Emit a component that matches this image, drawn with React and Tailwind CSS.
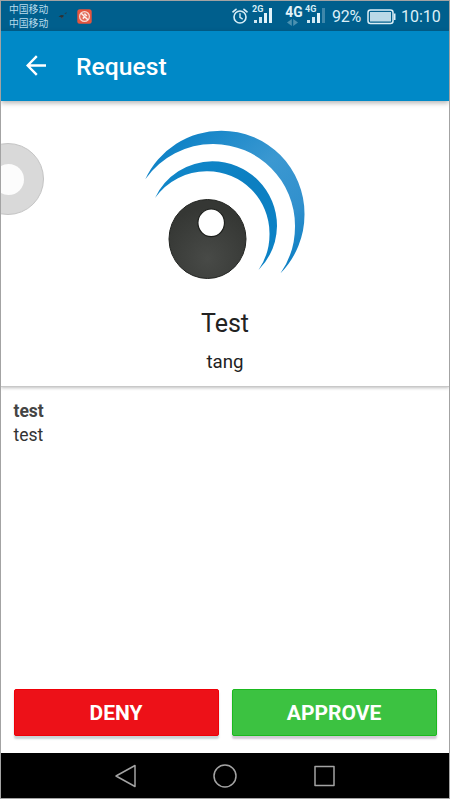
function CarrierLabels() {
  return (
    <div className="ml-2 w-[48px] pt-[2px] font-['Noto_Sans_CJK_SC',sans-serif] text-[9.8px] leading-[13.5px] text-[#b9dcec]">
      <div>中国移动</div>
      <div>中国移动</div>
    </div>
  );
}

function AlarmIcon() {
  return (
    <svg className="mt-[7px] h-[17px] w-[16px] shrink-0" viewBox="0 0 16 17" fill="none" stroke="#d7edf6" strokeLinecap="round">
      <circle cx="8" cy="9" r="6" strokeWidth="1.6" />
      <path d="M1 3.8 4 1.3M15 3.8 12 1.3" strokeWidth="1.7" />
      <path d="M8 5.7V9.3L10.3 10.8" strokeWidth="1.4" />
    </svg>
  );
}

function Signal({ label, dimLast }) {
  return (
    <div className="relative h-[30px] w-[22px] shrink-0">
      <span className="absolute left-0 top-[3px] text-[9px] font-bold leading-[10px] text-[#d7edf6]">{label}</span>
      <svg className="absolute left-[2px] top-[6px]" width="20" height="17" viewBox="0 0 20 17" fill="#cfe7f2">
        <rect x="0" y="13" width="3" height="3" />
        <rect x="5" y="10" width="3" height="6" />
        <rect x="10" y="6" width="3" height="10" fill="#e3f3f9" />
        <rect x="15" y="1" width="3" height="15" fill={dimLast ? "#3e87aa" : "#e3f3f9"} />
      </svg>
    </div>
  );
}

function StatusBar() {
  return (
    <div className="flex h-[30px] shrink-0 overflow-hidden bg-[#005f8d]">
      <CarrierLabels />
      <svg className="mt-[9px] h-[11px] w-[12px] shrink-0" viewBox="0 0 12 11">
        <path d="M1.5 6.8 4 5 6.8 5.2 6.2 7 4.5 7.8 3.6 7Z" fill="#2a3337" />
        <path d="M7.2 3.5 10 2 9 4.2Z" fill="#24414f" />
        <path d="M4.8 7.3 6 7.7 4.8 9Z" fill="#713d38" />
      </svg>
      <svg className="ml-[8px] mt-[8px] h-[15px] w-[15px] shrink-0" viewBox="0 0 15 15">
        <rect x=".3" y=".3" width="14.4" height="14.4" rx="2.5" fill="#e5553f" />
        <circle cx="7.5" cy="7.5" r="4.9" fill="#e46a58" stroke="#f6d8d2" strokeWidth="1.2" />
        <path d="M4.2 4.2 10.8 10.8M5.8 9.6 8 7.4M7.4 4.6 9.8 7" stroke="#fbece9" strokeWidth="1.5" fill="none" />
      </svg>
      <div className="flex-1" />
      <AlarmIcon />
      <div className="ml-[4px]"><Signal label="2G" /></div>
      <div className="ml-[10px] w-[17px]">
        <div className="mt-[4px] origin-right scale-x-[.92] text-[15px] font-bold leading-[15px] text-[#e3f3f9]">4G</div>
        <svg className="ml-[3px] -mt-[1px]" width="11" height="7" viewBox="0 0 11 7" fill="#4b91b0">
          <path d="M4.8 0V7L0 3.5ZM6.2 0 11 3.5 6.2 7Z" />
        </svg>
      </div>
      <div className="ml-[4px]"><Signal label="4G" dimLast /></div>
      <div className="ml-[5px] mt-[1px] w-[32px] text-[16px] leading-[30px] tracking-[-.2px] text-[#dceff7]">92%</div>
      <svg className="ml-[3px] mt-[8px] h-[16px] w-[29px] shrink-0" viewBox="0 0 29 16">
        <rect x="1" y="1" width="25" height="13.5" rx="2.5" fill="none" stroke="#dceff7" strokeWidth="1.5" />
        <rect x="3" y="3" width="21" height="9.5" fill="#bad9e7" />
        <path d="M27.7 4.5V11" stroke="#dceff7" strokeWidth="1.6" />
      </svg>
      <div className="ml-[5px] mr-[7px] mt-[1px] w-[41px] text-[16px] leading-[30px] text-[#dceff7]">10:10</div>
    </div>
  );
}

function Logo() {
  return (
    <svg width="180" height="160" viewBox="135 120 180 160" aria-label="Logo">
      <defs>
        <linearGradient id="outerArc" x1="0" y1="0" x2="1" y2="1">
          <stop offset="0" stopColor="#007bc3" />
          <stop offset=".5" stopColor="#3b98d1" />
          <stop offset=".75" stopColor="#3190cd" />
          <stop offset="1" stopColor="#0079c0" />
        </linearGradient>
        <linearGradient id="innerArc" x1="0" y1="0" x2="1" y2="1">
          <stop offset="0" stopColor="#1288cb" />
          <stop offset=".5" stopColor="#0c7fc1" />
          <stop offset="1" stopColor="#0c83c7" />
        </linearGradient>
        <radialGradient id="ball" cx=".5" cy=".75" r=".65">
          <stop offset="0" stopColor="#484a47" />
          <stop offset="1" stopColor="#353734" />
        </radialGradient>
      </defs>
      <path
        fill="url(#outerArc)"
        d="M145.3 179.3A83.5 83.5 0 0 1 221.5 130.7A83 83 0 0 1 304.5 214A84 84 0 0 1 280.5 273.3A82.5 82.5 0 0 0 295 226A81.8 81.8 0 0 0 213.5 144A82.5 82.5 0 0 0 145.3 179.3Z"
      />
      <path
        fill="url(#innerArc)"
        d="M155 198A64 64 0 0 1 212.3 161.2A64.7 64.7 0 0 1 277 226A64.5 64.5 0 0 1 258.5 270A63 63 0 0 0 269.5 233.5A62 62 0 0 0 207.5 171.3A63 63 0 0 0 155 198Z"
      />
      <ellipse cx="207.5" cy="239" rx="38.5" ry="39.5" fill="url(#ball)" stroke="#232522" strokeWidth="1" />
      <ellipse cx="211.2" cy="222.8" rx="13.3" ry="13.8" fill="#fff" stroke="#1c1e1b" strokeWidth="1.2" />
    </svg>
  );
}

export default function App() {
  return (
    <div className="relative flex h-[799px] w-[450px] flex-col overflow-hidden border border-[#a3a3a3] bg-white font-[Roboto,sans-serif]">
      <StatusBar />
      <header className="z-10 flex h-[69.5px] shrink-0 items-center bg-[#0089c7] shadow-[0_2px_5px_rgba(0,0,0,0.3)]">
        <svg className="ml-[25px]" width="21" height="21" viewBox="0 0 21 21" fill="none" stroke="#fff" strokeWidth="2.4">
          <path d="M20 10.5H2M10.8 1.2 1.6 10.5 10.8 19.8" />
        </svg>
        <h1 className="ml-[29px] mt-[2px] text-[24.7px] font-medium leading-8 text-white">Request</h1>
      </header>

      <section className="flex h-[286px] shrink-0 flex-col items-center border-b border-[#c8c8c8] pt-[19.5px] shadow-[0_1px_3px_rgba(0,0,0,0.25)]">
        <Logo />
        <div className="mt-[28px] text-[25px] leading-[32px] text-[#222]">Test</div>
        <div className="mt-[10px] text-[18.7px] leading-[24px] text-[#222]">tang</div>
      </section>

      <main className="flex-1 pl-[12.5px] pt-[13.5px] text-[17.5px] leading-[23.5px] text-[#333]">
        <div className="font-bold text-[#444]">test</div>
        <div>test</div>
      </main>

      <div className="mb-[17px] flex shrink-0 gap-[13px] px-[12.5px] text-[21px] font-bold text-white">
        <button className="h-[47px] flex-1 rounded-[2px] border border-[#ef0008] bg-[#ed1118] pt-[2px] shadow-[0_3px_2px_rgba(60,100,110,0.28)]">DENY</button>
        <button className="h-[47px] flex-1 rounded-[2px] border border-[#1bb91f] bg-[#3cc241] pt-[2px] shadow-[0_3px_2px_rgba(90,60,100,0.28)]">APPROVE</button>
      </div>

      <nav className="flex h-[45px] shrink-0 items-center justify-center bg-black">
        <svg width="224" height="24" viewBox="0 0 224 24" fill="none" stroke="#a3a3a3" strokeWidth="1.5" strokeLinejoin="round">
          <path d="M3 12 22 1.5V22.5Z" />
          <circle cx="112" cy="12" r="11" />
          <rect x="202" y="2.5" width="19" height="19" />
        </svg>
      </nav>

      <div className="absolute -left-[29px] top-[142px] flex h-[72px] w-[72px] items-center justify-center rounded-full border border-[#c4c4c4] bg-[#d9d9d9]">
        <div className="h-[31px] w-[31px] rounded-full bg-[#fcfcfc]" />
      </div>
    </div>
  );
}
